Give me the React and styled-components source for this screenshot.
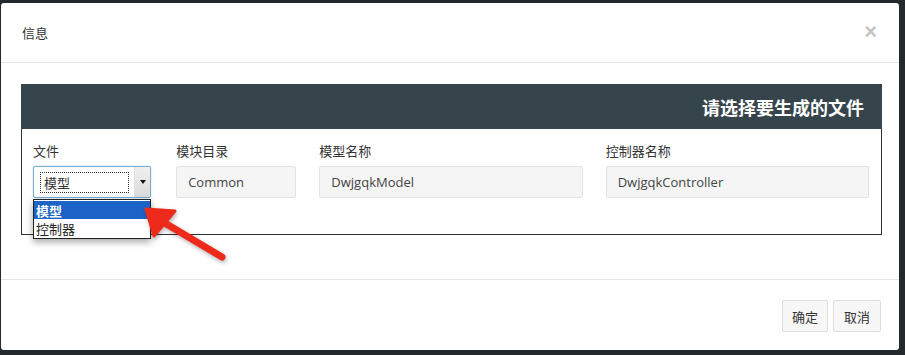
import React from 'react';
import styled, { createGlobalStyle } from 'styled-components';

const GlobalStyle = createGlobalStyle`
  html, body {
    margin: 0;
    padding: 0;
    background: #24292d;
  }
  body {
    font-family: "Open Sans", "Noto Sans CJK SC", sans-serif;
    color: #333;
  }
`;

const Backdrop = styled.div`
  width: 905px;
  height: 355px;
  padding: 3px 6px 0 1px;
  box-sizing: border-box;
  overflow: hidden;
`;

const Modal = styled.div`
  position: relative;
  width: 898px;
  height: 347px;
  background: #fff;
  border-radius: 3px;
  display: flex;
  flex-direction: column;
`;

const Header = styled.div`
  height: 59px;
  flex: none;
  border-bottom: 1px solid #e5e5e5;
  display: flex;
  align-items: center;
  justify-content: space-between;
  padding: 0 22px 0 21px;
`;

const Title = styled.h4`
  margin: 0;
  font-size: 13px;
  font-weight: 400;
  color: #333;
  font-family: "Noto Sans CJK SC", sans-serif;
`;

const Close = styled.span`
  font-family: "Liberation Sans", sans-serif;
  font-size: 22px;
  font-weight: 700;
  color: #c4c4c4;
  line-height: 1;
  margin-top: -2px;
`;

const Body = styled.div`
  flex: none;
  padding: 21px 17px 0 20px;
  height: 216px;
  box-sizing: border-box;
`;

const Panel = styled.div`
  width: 861px;
`;

const PanelHead = styled.div`
  height: 45px;
  background: #36444c;
  display: flex;
  align-items: center;
  justify-content: flex-end;
  padding-right: 18px;
  color: #fff;
  font-size: 18px;
  font-weight: 700;
  font-family: "Noto Sans CJK SC", sans-serif;
`;

const PanelBody = styled.div`
  border: 1px solid #2d3236;
  border-top: none;
  height: 106px;
  box-sizing: border-box;
  padding-top: 13px;
`;

const Row = styled.div`
  display: grid;
  grid-template-columns: 2fr 2fr 4fr 4fr;
`;

const Col = styled.div`
  position: relative;
  padding: 0 12px 0 11px;
`;

const Label = styled.div`
  font-size: 13px;
  line-height: 18px;
  color: #333;
  margin-bottom: 6px;
  font-family: "Noto Sans CJK SC", sans-serif;
`;

const Input = styled.div`
  height: 32px;
  box-sizing: border-box;
  border: 1px solid #e4e4e4;
  border-radius: 2px;
  background: #f5f5f5;
  display: flex;
  align-items: center;
  padding-left: 11px;
  font-size: 13px;
  color: #444;
`;

const Select = styled.div`
  height: 32px;
  width: 118px;
  box-sizing: border-box;
  border: 1px solid #79acd0;
  border-radius: 2px;
  background: #fff;
  display: flex;
  align-items: stretch;
  box-shadow: 0 0 2px rgba(102, 175, 233, 0.5);
`;

const SelectValue = styled.div`
  flex: 1;
  display: flex;
  align-items: center;
  padding: 5px 5px 5px 6px;
`;

const FocusRing = styled.div`
  flex: 1;
  height: 19px;
  border: 1px dotted #333;
  display: flex;
  align-items: center;
  padding-left: 3px;
  font-size: 13px;
  color: #333;
  font-family: "Noto Sans CJK SC", sans-serif;
`;

const SelectButton = styled.div`
  width: 15px;
  background: linear-gradient(#f0f0f0, #dadada);
  border-left: 1px solid #e0e0e0;
  display: flex;
  align-items: center;
  justify-content: center;
`;

const Caret = styled.span`
  width: 0;
  height: 0;
  border-left: 3px solid transparent;
  border-right: 3px solid transparent;
  border-top: 4px solid #111;
`;

const Menu = styled.ul`
  position: absolute;
  top: 57px;
  left: 11px;
  width: 118px;
  margin: 0;
  padding: 1px 0;
  list-style: none;
  box-sizing: border-box;
  background: #fff;
  border: 1px solid #222;
  box-shadow: 0 3px 7px rgba(0, 0, 0, 0.35);
  z-index: 2;
`;

const MenuItem = styled.li`
  height: 18px;
  display: flex;
  align-items: center;
  overflow: hidden;
  padding-left: 2px;
  font-size: 13px;
  line-height: 1;
  font-family: "Noto Sans CJK SC", sans-serif;
  color: ${(p) => (p.$active ? '#fff' : '#222')};
  background: ${(p) => (p.$active ? '#1b63c6' : 'transparent')};
  font-weight: ${(p) => (p.$active ? 700 : 400)};
`;

const Pointer = styled.svg`
  position: absolute;
  left: 138px;
  top: 194px;
  z-index: 3;
  filter: drop-shadow(1px 2px 2px rgba(0, 0, 0, 0.3));
`;

const Footer = styled.div`
  border-top: 1px solid #e5e5e5;
  flex: 1;
  display: flex;
  justify-content: flex-end;
  align-items: flex-start;
  gap: 5px;
  padding: 20px 18px 0 0;
`;

const Button = styled.button`
  height: 32px;
  padding: 0 ${(p) => p.$pad || 9}px;
  border: 1px solid #dcdcdc;
  border-radius: 2px;
  background: #f7f7f7;
  font-size: 13px;
  color: #333;
  font-family: "Noto Sans CJK SC", sans-serif;
`;

const fields = [
  { label: '模块目录', value: 'Common' },
  { label: '模型名称', value: 'DwjgqkModel' },
  { label: '控制器名称', value: 'DwjgqkController' },
];

export default function App() {
  return (
    <Backdrop>
      <GlobalStyle />
      <Modal>
        <Header>
          <Title>信息</Title>
          <Close>×</Close>
        </Header>
        <Body>
          <Panel>
            <PanelHead>请选择要生成的文件</PanelHead>
            <PanelBody>
              <Row>
                <Col>
                  <Label>文件</Label>
                  <Select>
                    <SelectValue>
                      <FocusRing>模型</FocusRing>
                    </SelectValue>
                    <SelectButton>
                      <Caret />
                    </SelectButton>
                  </Select>
                  <Menu>
                    <MenuItem $active>模型</MenuItem>
                    <MenuItem>控制器</MenuItem>
                  </Menu>
                </Col>
                {fields.map((f) => (
                  <Col key={f.label}>
                    <Label>{f.label}</Label>
                    <Input>{f.value}</Input>
                  </Col>
                ))}
              </Row>
            </PanelBody>
          </Panel>
        </Body>
        <Footer>
          <Button>确定</Button>
          <Button $pad={10}>取消</Button>
        </Footer>
        <Pointer width="95" height="72" viewBox="0 0 95 72">
          <line x1="14" y1="19" x2="83" y2="60" stroke="#ee2a1b" strokeWidth="7" strokeLinecap="round" />
          <polygon points="7,12 36,14 15,39" fill="#ee2a1b" stroke="#ee2a1b" strokeWidth="3" strokeLinejoin="round" />
        </Pointer>
      </Modal>
    </Backdrop>
  );
}
